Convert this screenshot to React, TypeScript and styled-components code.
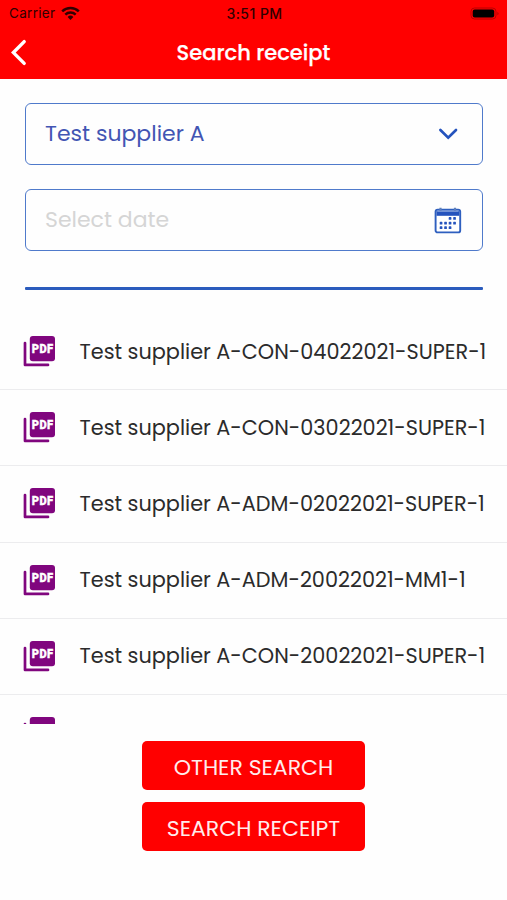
import React from 'react';
import styled, { createGlobalStyle } from 'styled-components';

const GlobalStyle = createGlobalStyle`
  * { box-sizing: border-box; }
  body { margin: 0; background: #fff; font-family: Poppins, Inter, sans-serif; }
  button { font-family: inherit; }
`;

const Screen = styled.main`
  width: 507px;
  height: 900px;
  overflow: hidden;
  display: flex;
  flex-direction: column;
  background: #fefefe;
`;

const Header = styled.header`
  height: 79px;
  flex: none;
  background: #ff0000;
`;

const StatusBar = styled.div`
  height: 27px;
  padding: 0 7px 0 9px;
  display: grid;
  grid-template-columns: 1fr auto 1fr;
  align-items: center;
  color: #300000;
  font-family: Inter, sans-serif;
  line-height: 27px;
`;

const Carrier = styled.div`
  display: flex;
  align-items: center;
  gap: 6px;
  font-size: 13.5px;
  letter-spacing: 0.3px;
`;

const Clock = styled.div`
  font-weight: 500;
  font-size: 14px;
  letter-spacing: 0.45px;
`;

const BatterySlot = styled.div`
  display: flex;
  justify-content: flex-end;
`;

const NavBar = styled.div`
  height: 52px;
  padding: 0 10px;
  display: grid;
  grid-template-columns: 20px 1fr 20px;
  align-items: center;
`;

const BackButton = styled.button`
  height: 29px;
  padding: 0 0 2px;
  border: 0;
  background: none;
  display: flex;
`;

const Title = styled.h1`
  margin: 0;
  padding-bottom: 1px;
  text-align: center;
  color: #fff;
  font-size: 21px;
  font-weight: 500;
  -webkit-text-stroke: 0.25px #fff;
`;

const Filters = styled.section`
  flex: none;
  padding: 24px 24px 0 25px;
  display: flex;
  flex-direction: column;
  gap: 24px;
`;

const Field = styled.div<{ $empty?: boolean }>`
  height: 62px;
  padding: 0 20px 2px 19px;
  display: flex;
  align-items: center;
  justify-content: space-between;
  border: 1.5px solid #4f7acb;
  border-radius: 6px;
  color: ${(p) => (p.$empty ? '#d5d5d5' : '#4255b3')};
  font-size: 22px;
`;

const Divider = styled.div`
  height: 3px;
  margin: 12px 0 0;
  border-radius: 1px;
  background: #2b5cbd;
`;

const List = styled.ul`
  flex: none;
  height: 410px;
  margin: 24px 0 0;
  padding: 0;
  list-style: none;
  overflow: hidden;
`;

const Row = styled.li`
  height: 76.2px;
  padding: 0 0 0 23px;
  display: flex;
  align-items: center;
  gap: 23.5px;
  border-bottom: 1.5px solid #ececee;
`;

const RowLabel = styled.span`
  padding-bottom: 1px;
  color: #2b2b2b;
  font-size: 20.8px;
  white-space: nowrap;
`;

const Actions = styled.footer`
  padding-top: 17px;
  display: flex;
  flex-direction: column;
  align-items: center;
  gap: 12px;
`;

const ActionButton = styled.button`
  width: 223px;
  height: 49px;
  padding: 3px 0 0;
  border: 0;
  border-radius: 5px;
  background: #ff0000;
  color: #ffecec;
  font-size: 22px;
`;

const WifiIcon = () => (
  <svg width="19" height="15" viewBox="0 0 19 15" fill="none" stroke="#300000" strokeWidth="2.5">
    <path d="M1.2 5.4a12 12 0 0 1 16.6 0" />
    <path d="M4.3 8.6a7.6 7.6 0 0 1 10.4 0" />
    <path d="M6.6 11a4.2 4.2 0 0 1 5.8 0l-2.9 3z" fill="#300000" stroke="none" />
  </svg>
);

const BatteryIcon = () => (
  <svg width="30" height="13" viewBox="0 0 30 13">
    <rect x="1" y="1" width="25" height="11" rx="3.5" fill="none" stroke="#b80000" />
    <rect x="2.7" y="2.5" width="21.5" height="8" rx="2" fill="#000" />
    <path d="M27.5 4.7q2 1.8 0 3.6z" fill="#a40000" />
  </svg>
);

const BackIcon = () => (
  <svg width="18" height="28" viewBox="0 0 18 28" fill="none" stroke="#fff" strokeWidth="3.4" strokeLinecap="round" strokeLinejoin="miter">
    <path d="M14.2 2.6L3.4 13.6L14.2 24.4" />
  </svg>
);

const ChevronIcon = () => (
  <svg width="28" height="20" viewBox="0 0 28 20" fill="none" stroke="#2453bd" strokeWidth="2.7" strokeLinecap="round">
    <path d="M6.4 7L14.2 14.6L22 7" />
  </svg>
);

const calendarDots = [
  [16, 11.3], [20.5, 11.3],
  [7, 16], [11.5, 16], [16, 16], [20.5, 16],
  [7, 20.5], [11.5, 20.5], [16, 20.5],
];

const CalendarIcon = () => (
  <svg width="28" height="26" viewBox="0 -1 28 26" overflow="visible">
    <rect x="1.6" y="2.6" width="24.6" height="22.8" rx="2" fill="#fff" stroke="#2e5fbf" strokeWidth="1.9" />
    <path d="M2.5 3.6h22.8v5.2H2.5z" fill="#2453bd" />
    <path d="M3.2 4.3h21.4" stroke="#86a3dc" strokeWidth="1" />
    <path d="M6.5 .8v3M21 .8v3" stroke="#5d7fbd" strokeWidth="2.2" />
    {calendarDots.map(([x, y]) => (
      <rect key={`${x}-${y}`} x={x - 1.3} y={y - 1.2} width="2.7" height="2.7" rx=".6" fill="#2453bd" />
    ))}
  </svg>
);

const PdfIcon = () => (
  <svg width="33" height="33" viewBox="0 0 33 33">
    <rect x="6.8" y="1" width="25.2" height="25.2" rx="3" fill="#80067e" />
    <path d="M2 8v21.9h23" fill="none" stroke="#80067e" strokeWidth="2.7" strokeLinecap="round" strokeLinejoin="round" />
    <text x="8.7" y="18" fill="#fff" stroke="#fff" strokeWidth=".4" fontFamily="Roboto, sans-serif" fontWeight="900" fontSize="13.2" textLength="22" lengthAdjust="spacingAndGlyphs" letterSpacing=".6">PDF</text>
  </svg>
);

const receipts = [
  'Test supplier A-CON-04022021-SUPER-1',
  'Test supplier A-CON-03022021-SUPER-1',
  'Test supplier A-ADM-02022021-SUPER-1',
  'Test supplier A-ADM-20022021-MM1-1',
  'Test supplier A-CON-20022021-SUPER-1',
  'Test supplier A',
];

export default function App() {
  return (
    <>
      <GlobalStyle />
      <Screen>
        <Header>
          <StatusBar>
            <Carrier>Carrier<WifiIcon /></Carrier>
            <Clock>3:51 PM</Clock>
            <BatterySlot><BatteryIcon /></BatterySlot>
          </StatusBar>
          <NavBar>
            <BackButton aria-label="Back"><BackIcon /></BackButton>
            <Title>Search receipt</Title>
          </NavBar>
        </Header>
        <Filters>
          <Field>Test supplier A<ChevronIcon /></Field>
          <Field $empty>Select date<CalendarIcon /></Field>
          <Divider />
        </Filters>
        <List>
          {receipts.map((name, i) => (
            <Row key={i}>
              <PdfIcon />
              <RowLabel>{name}</RowLabel>
            </Row>
          ))}
        </List>
        <Actions>
          <ActionButton>OTHER SEARCH</ActionButton>
          <ActionButton>SEARCH RECEIPT</ActionButton>
        </Actions>
      </Screen>
    </>
  );
}
